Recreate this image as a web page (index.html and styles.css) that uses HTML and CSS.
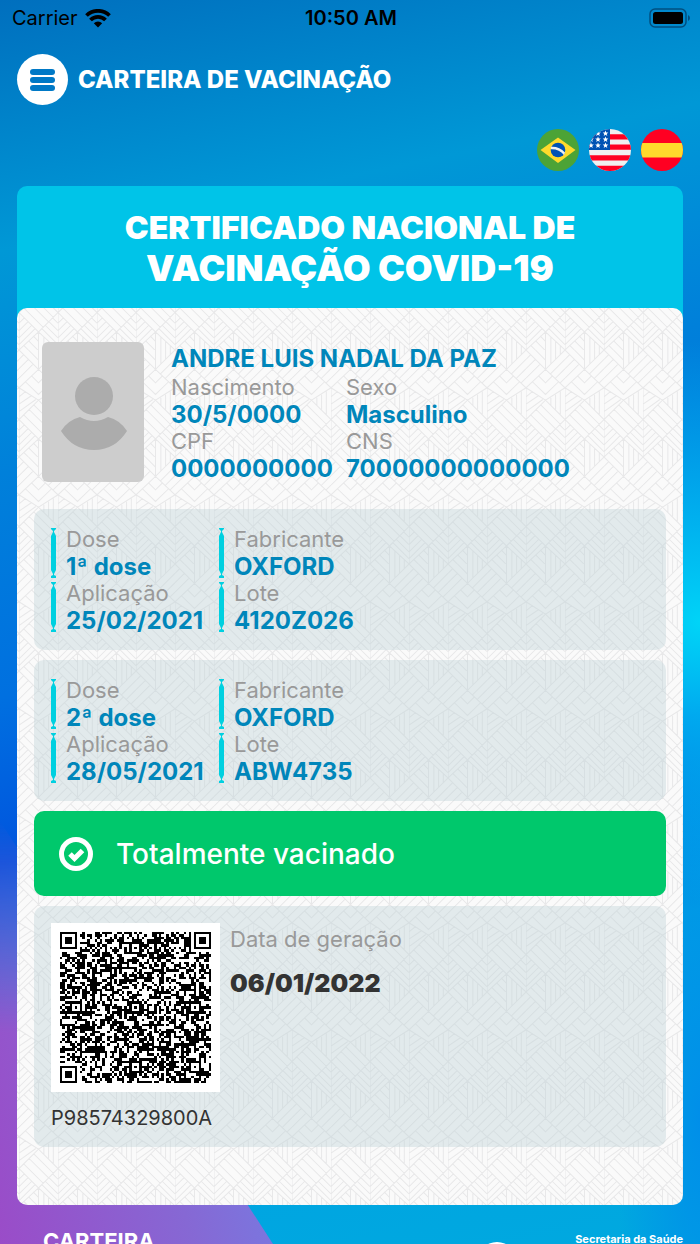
FILE: index.html
```html
<!DOCTYPE html>
<html lang="pt-BR">

<head>
    <meta charset="UTF-8">
    <meta name="viewport" content="width=device-width, initial-scale=1.0">
    <title>Carteira de Vacinação</title>
    <link rel="stylesheet" href="styles.css">
</head>

<body>
    <div class="screen">
        <div class="statusbar">
            <div class="carrier">
                <span>Carrier</span>
                <svg width="26" height="19" viewBox="0 0 26 19">
                    <path d="M1.500 6.500a16.500 16.500 0 0 1 23 0M5.500 11a10.500 10.500 0 0 1 15 0" fill="none" stroke="#000" stroke-width="3.800" />
                    <path d="M13 18.500l-4.200-4.200a6 6 0 0 1 8.400 0z" />
                </svg>
            </div>
            <span class="clock">10:50 AM</span>
            <svg class="battery" width="42" height="20" viewBox="0 0 42 20">
                <rect x="2" y="1" width="36" height="18" rx="5" fill="none" stroke="#004f80" stroke-width="1.500" />
                <rect x="5" y="4" width="30" height="12" rx="2.500" />
                <path d="M40 7q2 1 2 3t-2 3z" fill="#004f80" />
            </svg>
        </div>

        <header>
            <button class="menu" aria-label="Menu">
                <span></span>
                <span></span>
                <span></span>
            </button>
            <h1>CARTEIRA DE VACINAÇÃO</h1>
        </header>

        <div class="languages">
            <button aria-label="Português">
                <svg viewBox="0 0 42 42">
                    <circle cx="21" cy="21" r="21" fill="#4ca336" />
                    <path d="M21 8.500L38.500 21 21 34 3.500 21z" fill="#ffda2c" />
                    <circle cx="21" cy="21" r="7.300" fill="#0052b4" />
                    <path d="M14 17.800q8.500-.5 14 5.600l-1 2.500q-5-6-13.200-5.600z" fill="#f0f0f0" />
                </svg>
            </button>
            <button aria-label="English">
                <svg viewBox="0 0 42 42">
                    <defs>
                        <clipPath id="round">
                            <circle cx="21" cy="21" r="21" />
                        </clipPath>
                        <path id="star" d="M0-2.900L.8-.9 2.800-.9 1.200.4 1.800 2.500 0 1.200-1.800 2.500-1.200.4-2.800-.9-.8-.9z" fill="#fff" />
                    </defs>
                    <g clip-path="url(#round)">
                        <rect width="42" height="42" fill="#f0f0f0" />
                        <path d="M0 7.800h42M0 18.200h42M0 28.900h42M0 39.500h42" stroke="#ff0022" stroke-width="5.300" />
                        <rect width="21" height="21" fill="#0052b4" />
                        <use href="#star" x="16.500" y="4.500" />
                        <use href="#star" x="9" y="4.500" />
                        <use href="#star" x="16.500" y="10.500" />
                        <use href="#star" x="9" y="10.500" />
                        <use href="#star" x="2" y="10.500" />
                        <use href="#star" x="16.500" y="16.500" />
                        <use href="#star" x="9" y="16.500" />
                        <use href="#star" x="2" y="16.500" />
                    </g>
                </svg>
            </button>
            <button aria-label="Español">
                <svg viewBox="0 0 42 42">
                    <g clip-path="url(#round)">
                        <rect width="42" height="42" fill="#ff0022" />
                        <rect y="14" width="42" height="14.500" fill="#ffda2c" />
                    </g>
                </svg>
            </button>
        </div>

        <main>
            <h2>CERTIFICADO NACIONAL DE<br><span>VACINAÇÃO COVID-19</span></h2>
            <div class="certificate">
                <section class="profile">
                    <svg class="photo" width="102" height="140" viewBox="0 0 102 140">
                        <rect width="102" height="140" rx="6" fill="#cdcdcd" />
                        <circle cx="52" cy="54" r="19" fill="#acacac" />
                        <path d="M19 89Q26 78 38 75q14 8 28 0 12 3 19 14-12 19-33 19T19 89z" fill="#acacac" />
                    </svg>
                    <div>
                        <h3>ANDRE LUIS NADAL DA PAZ</h3>
                        <div class="details">
                            <dl>
                                <dt>Nascimento</dt>
                                <dd>30/5/0000</dd>
                                <dt>CPF</dt>
                                <dd>0000000000</dd>
                            </dl>
                            <dl>
                                <dt>Sexo</dt>
                                <dd>Masculino</dd>
                                <dt>CNS</dt>
                                <dd>70000000000000</dd>
                            </dl>
                        </div>
                    </div>
                </section>

                <section class="panel dose">
                    <dl>
                        <dt>Dose</dt>
                        <dd>1ª dose</dd>
                        <dt>Aplicação</dt>
                        <dd>25/02/2021</dd>
                    </dl>
                    <dl>
                        <dt>Fabricante</dt>
                        <dd>OXFORD</dd>
                        <dt>Lote</dt>
                        <dd>4120Z026</dd>
                    </dl>
                </section>

                <section class="panel dose">
                    <dl>
                        <dt>Dose</dt>
                        <dd>2ª dose</dd>
                        <dt>Aplicação</dt>
                        <dd>28/05/2021</dd>
                    </dl>
                    <dl>
                        <dt>Fabricante</dt>
                        <dd>OXFORD</dd>
                        <dt>Lote</dt>
                        <dd>ABW4735</dd>
                    </dl>
                </section>

                <section class="status">
                    <svg width="34" height="34" viewBox="0 0 34 34">
                        <circle cx="17" cy="17" r="14.500" fill="none" stroke="#fff" stroke-width="5" />
                        <path d="M11 17l4.500 4.500 8-8" fill="none" stroke="#fff" stroke-width="5" />
                    </svg>
                    <span>Totalmente vacinado</span>
                </section>

                <section class="panel validation">
                    <div class="code">
                        <div class="qr"></div>
                        <p>P98574329800A</p>
                    </div>
                    <div class="generated">
                        <p>Data de geração</p>
                        <strong>06/01/2022</strong>
                    </div>
                </section>
            </div>
        </main>

        <footer>
            <span class="brand">CARTEIRA</span>
            <svg width="40" height="40" viewBox="0 0 40 40">
                <circle cx="20" cy="20" r="20" fill="#fff" />
            </svg>
            <span class="office">Secretaria da Saúde</span>
        </footer>
    </div>

    <script src="qr.js"></script>
</body>

</html>
```
FILE: styles.css
```css
* {
    margin: 0;
    border: 0;
    padding: 0;
    box-sizing: border-box;
}

body {
    font-family: Inter, "Liberation Sans", sans-serif;
    color: #333;
}

button {
    background: none;
    cursor: pointer;
}

svg {
    display: block;
}

.screen {
    position: relative;
    isolation: isolate;
    height: 100vh;
    display: flex;
    flex-direction: column;
    overflow: hidden;
    background:
        radial-gradient(circle at 100% 50%, #00d4f7, rgba(0, 205, 245, 0) 30%),
        radial-gradient(ellipse 12% 30% at 100% 90%, #008fe9, rgba(0, 144, 232, 0)),
        linear-gradient(168deg, #006fbe, #0098d6 18%, #0080da 34%, #0070e0 50%, #0054de 62%, #00a0e4 76%, #00a9df);
}

/* purple wave in the lower left corner */
.screen::before {
    content: "";
    position: absolute;
    z-index: -1;
    left: 0;
    bottom: 0;
    width: 39%;
    height: 34%;
    clip-path: polygon(0 0, 10% 10%, 91% 91%, 100% 100%, 0 100%);
    background: linear-gradient(75deg, #9a4cc8, #8668d4 50%, #6c88ec);
    -webkit-mask-image: linear-gradient(transparent, #000 50%);
    mask-image: linear-gradient(transparent, #000 50%);
}

.statusbar,
header,
.languages,
main,
footer {
    flex-shrink: 0;
}

.statusbar {
    display: grid;
    grid-template-columns: 1fr auto 1fr;
    align-items: center;
    height: 36px;
    padding: 0 10px 0 12px;
    font-size: 20px;
    color: #000;
}

.carrier {
    display: flex;
    align-items: center;
    gap: 7px;
}

.clock {
    font-weight: 600;
}

.battery {
    justify-self: end;
}

header {
    display: flex;
    align-items: center;
    gap: 10px;
    margin-top: 18px;
    padding: 0 17px;
}

.menu {
    display: flex;
    flex-direction: column;
    align-items: center;
    justify-content: center;
    gap: 2px;
    width: 51px;
    height: 51px;
    border-radius: 50%;
    background-color: white;
}

.menu span {
    width: 25px;
    height: 6px;
    border-radius: 3px;
    background-color: #0079c6;
}

h1 {
    font-size: 24px;
    font-weight: 800;
    color: white;
}

.languages {
    display: flex;
    justify-content: flex-end;
    gap: 10px;
    margin-top: 24px;
    padding: 0 17px;
}

.languages button {
    width: 42px;
    height: 42px;
    border-radius: 50%;
}

main {
    margin: 15px 17px 0;
}

h2 {
    padding: 22px 10px 30px;
    border-radius: 10px 10px 0 0;
    background-color: #00c4e8;
    color: white;
    text-align: center;
    font-size: 32px;
    font-weight: 900;
    line-height: 40px;
}

h2 span {
    font-size: 36px;
}

.certificate {
    display: flex;
    flex-direction: column;
    gap: 10px;
    margin-top: -12px;
    padding: 34px 17px 58px;
    border-radius: 10px;
    background: #fafafa url("data:image/svg+xml,%3Csvg xmlns='http://www.w3.org/2000/svg' width='39' height='107' viewBox='0 0 116 320' preserveAspectRatio='none' fill='none' stroke='%23e8e8e9' stroke-width='3'%3E%3Cpath d='M0 0L58 58 116 0M0 113L58 58 116 113M0 28L14 14M0 56L28 28M0 84L42 42M116 28L72 72M116 56L86 86M116 84L100 100M38 78L58 98 78 78M19 95L58 133 97 95M0 113L58 150 116 113M0 208L58 150 116 208M0 113V208M0 140L20 124M0 162L38 136M0 184L50 148M74 143V165M88 134V178M102 124V192M44 164L102 222M30 178L88 236M14 194L72 252M0 208L58 266 116 208M0 240L16 224M0 262L27 235M0 284L38 246M0 304L48 256M116 240L100 224M116 262L89 235M116 284L78 246M116 304L68 256M0 208V320M0 320L58 266 116 320M14 306L28 320M28 292L56 320M42 278L58 294M0 0L58 58M28 0L58 30M58 266V320M58 0V58M74 281V320M88 295V320M102 308V320M74 0V43M88 0V29M102 0V15'/%3E%3C/svg%3E") 2px 42px;
}

.profile {
    display: flex;
    gap: 27px;
    margin: 0 8px 17px;
}

.profile h3 {
    margin: 3px 0 2px;
    font-size: 24px;
    line-height: 27px;
    color: #0086ba;
}

.details {
    display: grid;
    grid-template-columns: 175px 1fr;
}

dt,
dd {
    line-height: 27px;
}

dt {
    font-size: 22px;
    color: #999;
}

dd {
    font-size: 24px;
    font-weight: 700;
    color: #0086ba;
}

.panel {
    border-radius: 10px;
    background-color: rgba(190, 210, 215, 0.4);
}

.dose {
    display: grid;
    grid-template-columns: 168px 1fr;
    padding: 17px 17px 16px;
}

.dose dl {
    padding-left: 15px;
    background: url("data:image/svg+xml,%3Csvg xmlns='http://www.w3.org/2000/svg' width='5' height='54' viewBox='0 0 5 54' fill='%2300d0e0'%3E%3Cpath d='M0 2h5v1L3 5v1l2 4v34l-2 4v1l2 1v2H0v-2l2-1v-1l-2-4V10l2-4V5L0 3z'/%3E%3C/svg%3E") repeat-y;
}

.status {
    display: flex;
    align-items: center;
    gap: 23px;
    height: 85px;
    padding: 0 25px;
    border-radius: 10px;
    background-color: #00c86c;
    color: white;
    font-size: 28px;
    font-weight: 500;
}

.validation {
    display: flex;
    gap: 10px;
    padding: 17px 17px 15px;
}

.qr {
    width: 169px;
    height: 169px;
    padding: 9px;
    background-color: white;
}

.code p {
    margin-top: 13px;
    font-size: 20px;
    line-height: 27px;
}

.generated p {
    margin-top: 3px;
    font-size: 22px;
    line-height: 27px;
    color: #999;
}

.generated strong {
    display: block;
    margin-top: 17px;
    font-size: 25px;
    font-weight: 900;
    line-height: 27px;
}

footer {
    display: flex;
    align-items: flex-start;
    padding: 23px 17px 0 43px;
    color: white;
}

.brand {
    font-size: 22px;
    font-weight: 700;
    line-height: 27px;
}

footer svg {
    margin: 14px 58px 0 auto;
}

.office {
    padding-top: 3px;
    font-size: 11px;
    font-weight: 700;
    line-height: 16px;
}
```
FILE: qr.js
```js
const size = 61;
let seed = 98574;

function next() {
    seed = (seed + 0x6D2B79F5) | 0;
    let t = Math.imul(seed ^ (seed >>> 15), 1 | seed);
    t = (t + Math.imul(t ^ (t >>> 7), 61 | t)) ^ t;
    return ((t ^ (t >>> 14)) >>> 0) / 4294967296;
}

// distance in square rings from the centre of a mark
function ring(x, y, cx, cy) {
    return Math.max(Math.abs(x - cx), Math.abs(y - cy));
}

function isDark(x, y) {
    const noise = next() < 0.52;
    const corners = [[3, 3], [size - 4, 3], [3, size - 4]];
    for (const [cx, cy] of corners) {
        const d = ring(x, y, cx, cy);
        if (d <= 4) return d !== 2 && d !== 4;
    }
    for (const cx of [6, 30, 54]) {
        for (const cy of [6, 30, 54]) {
            const d = ring(x, y, cx, cy);
            const nearCorner = (cx === 6 && cy !== 30) || (cx === 54 && cy === 6);
            if (d <= 2 && !nearCorner) return d !== 1;
        }
    }
    if (x === 6 || y === 6) return (x + y) % 2 === 0;
    return noise;
}

let path = '';
for (let y = 0; y < size; y++) {
    for (let x = 0; x < size; x++) {
        if (isDark(x, y)) path += `M${x} ${y}h1v1h-1z`;
    }
}

document.querySelector('.qr').innerHTML = `
    <svg viewBox="0 0 ${size} ${size}" shape-rendering="crispEdges" role="img" aria-label="QR Code">
        <path d="${path}" />
    </svg>`;
```
